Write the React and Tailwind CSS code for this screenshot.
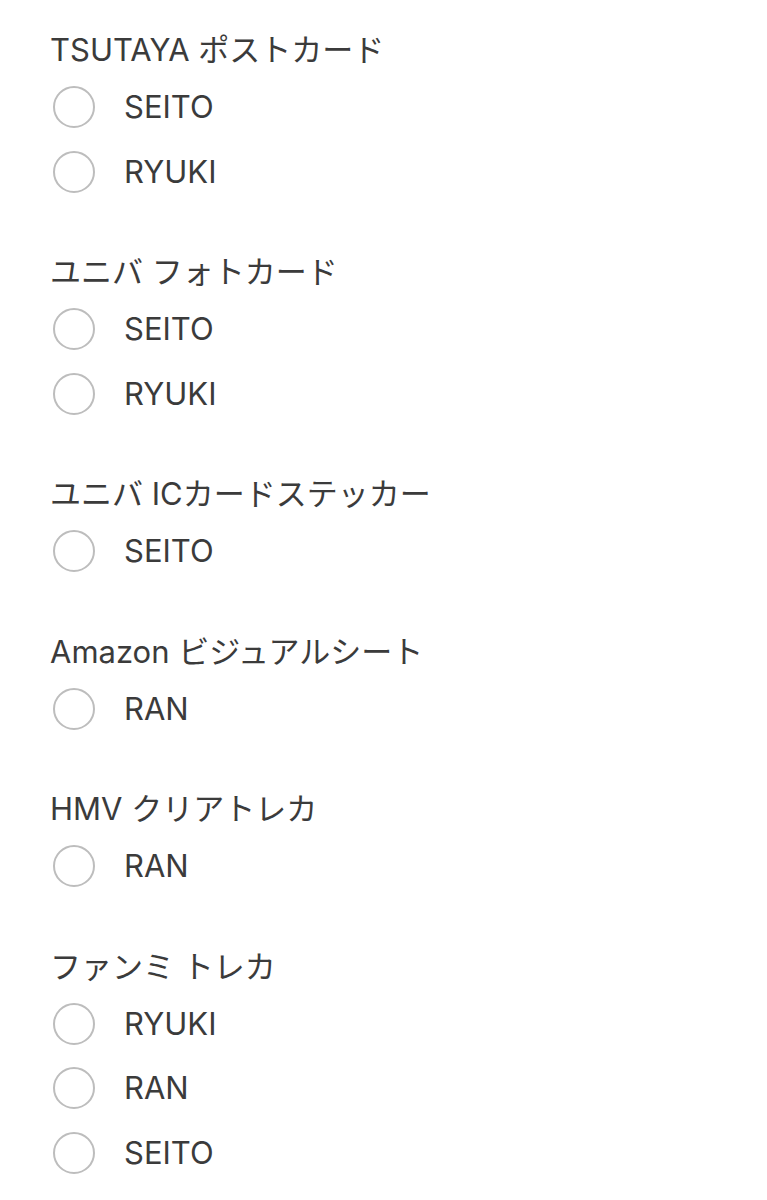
import React from "react";

const groups = [
  { title: "TSUTAYA ポストカード", options: ["SEITO", "RYUKI"] },
  { title: "ユニバ フォトカード", options: ["SEITO", "RYUKI"] },
  { title: "ユニバ ICカードステッカー", options: ["SEITO"] },
  { title: "Amazon ビジュアルシート", options: ["RAN"] },
  { title: "HMV クリアトレカ", options: ["RAN"] },
  { title: "ファンミ トレカ", options: ["RYUKI", "RAN", "SEITO"] },
];

export default function App() {
  return (
    <div
      className="min-h-[1200px] w-[767px] bg-white pl-[50px] pt-[30px] text-[#3b3b3b]"
      style={{ fontFamily: 'Inter, "Noto Sans CJK JP", sans-serif' }}
    >
      <div className="flex flex-col gap-[48px]">
        {groups.map((g, i) => (
          <div key={i} className="flex flex-col">
            <div className="h-[40px] text-[31px] leading-[40px] whitespace-nowrap mb-[5px]">
              {g.title}
            </div>
            {g.options.map((o, j) => (
              <label key={j} className="flex h-[64.5px] items-center">
                <span className="ml-[3px] h-[42px] w-[42px] shrink-0 rounded-full border-2 border-[#bdbdbd] bg-white" />
                <span className="ml-[29px] text-[31px] leading-[40px]">{o}</span>
              </label>
            ))}
          </div>
        ))}
      </div>
    </div>
  );
}
